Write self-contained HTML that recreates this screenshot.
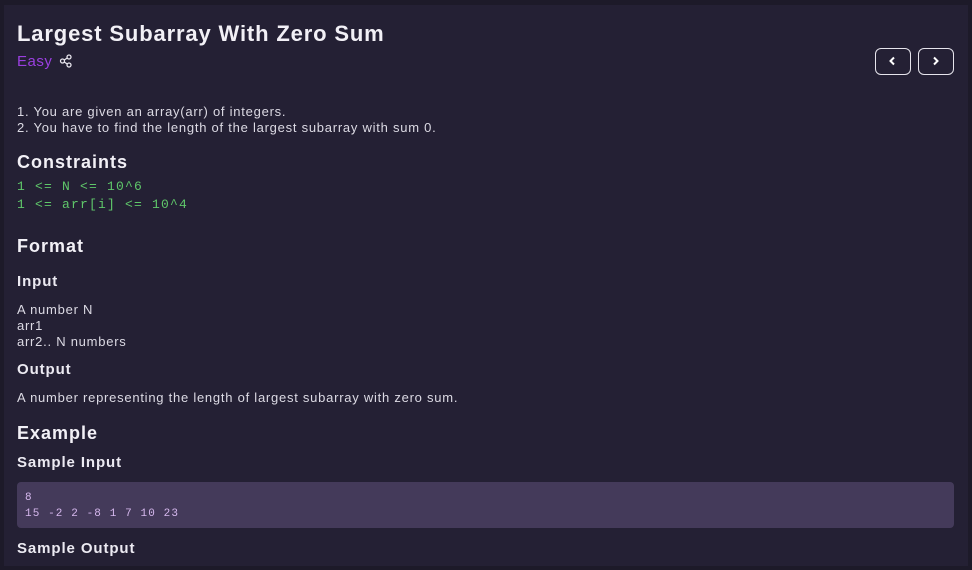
<!DOCTYPE html><html><head><style>
body{margin:0;width:972px;height:570px;background:#1d1a29;font-family:"Liberation Sans",sans-serif;color:#e8e6ee;overflow:hidden;position:relative}
.p{position:absolute;left:4px;top:5px;width:964px;height:561px;background:#242034}
.a{position:absolute;white-space:nowrap}
h1{position:absolute;left:17px;top:21px;margin:0;font-size:22px;font-weight:bold;letter-spacing:0.85px;color:#f2f0f6}
.h2{font-size:18px;font-weight:bold;color:#f2f0f6;letter-spacing:1px}
.h3{font-size:15px;font-weight:bold;color:#eceaf2;letter-spacing:0.9px}
.t{font-size:13px;color:#dcdae4;line-height:16px;letter-spacing:0.75px}
.m{font-family:"Liberation Mono",monospace;font-size:13px;letter-spacing:1.2px;color:#5fc76a;line-height:18px}
.btn{position:absolute;top:48px;width:36px;height:27px;border:1.5px solid #e6e4ec;border-radius:6px;box-sizing:border-box}
.box{position:absolute;left:17px;top:482px;width:937px;height:46px;background:#443a5a;border-radius:4px}
.box div{font-family:"Liberation Mono",monospace;font-size:11px;letter-spacing:1.1px;color:#d6b8ee;line-height:16px;padding:8px 0 0 8px;white-space:pre}
</style></head><body><div class="p"></div>
<h1>Largest Subarray With Zero Sum</h1>
<div class="a" style="left:17px;top:53px;font-size:15px;color:#9a3fe0;letter-spacing:0.5px">Easy</div>
<svg class="a" style="left:59px;top:54px" width="14" height="14" viewBox="0 0 14 14" fill="none" stroke="#e8e6ee" stroke-width="1.3"><circle cx="10" cy="3" r="2"/><circle cx="3.5" cy="7" r="2"/><circle cx="10" cy="11" r="2"/><path d="M5.3 6 8.2 4M5.3 8 8.2 10"/></svg>
<div class="btn" style="left:875px"><svg width="33" height="24" viewBox="0 0 33 24"><path d="M18 8.5 14.5 12 18 15.5" fill="none" stroke="#fff" stroke-width="2"/></svg></div>
<div class="btn" style="left:918px"><svg width="33" height="24" viewBox="0 0 33 24"><path d="M15 8.5 18.5 12 15 15.5" fill="none" stroke="#fff" stroke-width="2"/></svg></div>
<div class="a t" style="left:17px;top:104px">1. You are given an array(arr) of integers.<br>2. You have to find the length of the largest subarray with sum 0.</div>
<div class="a h2" style="left:17px;top:152px">Constraints</div>
<div class="a m" style="left:17px;top:178px">1 &lt;= N &lt;= 10^6<br>1 &lt;= arr[i] &lt;= 10^4</div>
<div class="a h2" style="left:17px;top:236px">Format</div>
<div class="a h3" style="left:17px;top:273px">Input</div>
<div class="a t" style="left:17px;top:302px">A number N<br>arr1<br>arr2.. N numbers</div>
<div class="a h3" style="left:17px;top:361px">Output</div>
<div class="a t" style="left:17px;top:390px">A number representing the length of largest subarray with zero sum.</div>
<div class="a h2" style="left:17px;top:423px">Example</div>
<div class="a h3" style="left:17px;top:454px">Sample Input</div>
<div class="box"><div>8
15 -2 2 -8 1 7 10 23</div></div>
<div class="a h3" style="left:17px;top:540px">Sample Output</div>
</body></html>
